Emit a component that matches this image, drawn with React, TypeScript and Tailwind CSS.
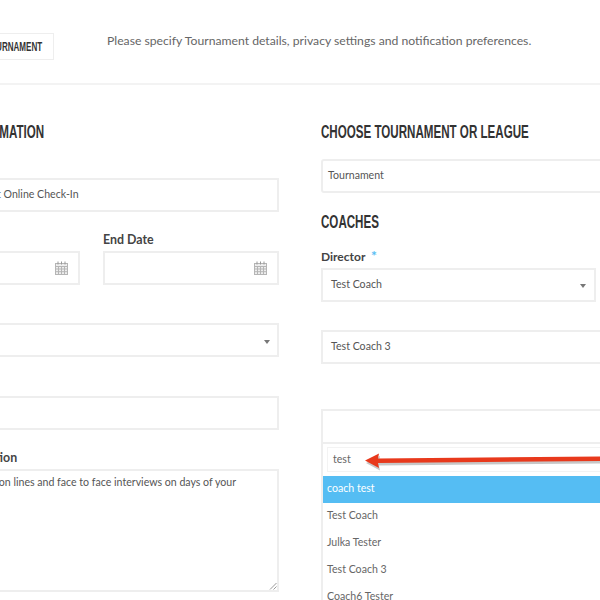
const bodyFont = "font-['Lato','Noto_Sans',sans-serif]"
const headingFont = "font-['Liberation_Sans',sans-serif]"

function CalendarIcon() {
  return (
    <svg width="13" height="14" viewBox="0 0 13 14" fill="none" stroke="#b5b5b5" strokeWidth="1">
      <rect x="0.5" y="2.5" width="12" height="11" fill="#eeeeee" />
      <path d="M0.5 5.5h12M0.5 8h12M0.5 10.7h12M3.5 5.5v8M6.5 5.5v8M9.5 5.5v8" />
      <path d="M3 0.5v3M6.5 0.5v3M10 0.5v3" stroke="#999999" />
    </svg>
  )
}

function Caret() {
  return <span className="mt-[3px] h-0 w-0 border-x-[3.5px] border-t-[4px] border-x-transparent border-t-[#777]" />
}

function Field({ children, className = '' }: { children?: React.ReactNode; className?: string }) {
  return (
    <div className={`flex items-center border-2 border-[#eeeeee] bg-white text-[10.6px] text-[#555] ${className}`}>
      {children}
    </div>
  )
}

function Heading({ children, className = '' }: { children: React.ReactNode; className?: string }) {
  return (
    <h2
      className={`${headingFont} origin-left scale-x-[0.61] text-[19px] leading-[20px] font-bold whitespace-nowrap text-[#333] ${className}`}
    >
      {children}
    </h2>
  )
}

export default function App() {
  return (
    <div className={`${bodyFont} relative h-[600px] w-[600px] overflow-hidden bg-white`}>
      {/* top bar */}
      <div className="flex h-[85px] w-[600px] items-start border-b-2 border-[#f3f3f3] pt-[33px]">
        <div className="-ml-[60px] flex h-[27px] w-[114px] shrink-0 items-center justify-end border border-[#eeeeee] pr-[11px]">
          <span
            className={`${headingFont} origin-right scale-x-[0.62] text-[13px] font-bold whitespace-nowrap text-[#333]`}
          >
            TOURNAMENT
          </span>
        </div>
        <p className="ml-[53px] text-[12.2px] leading-[16px] whitespace-nowrap text-[#666]">
          Please specify Tournament details, privacy settings and notification preferences.
        </p>
      </div>

      <div className="-ml-[73px] flex w-[746px] gap-[42px]">
        {/* left column */}
        <div className="flex w-[352px] shrink-0 flex-col">
          <Heading className="mt-[37px] -ml-[3px]">BASIC INFORMATION</Heading>
          <Field className="mt-[36px] h-[34px] pb-[1px] pl-[16px]">Tournament Online Check-In</Field>
          <div className="mt-[39px] flex gap-[23px]">
            <Field className="h-[34px] w-[153px] justify-end pr-[10px]">
              <CalendarIcon />
            </Field>
            <div className="relative w-[176px]">
              <span className="absolute -top-[19px] left-0 text-[12.4px] leading-[16px] font-bold whitespace-nowrap text-[#444]">
                End Date
              </span>
              <Field className="h-[34px] justify-end pr-[10px]">
                <CalendarIcon />
              </Field>
            </div>
          </div>
          <Field className="mt-[38px] h-[34px] justify-end pr-[7px]">
            <Caret />
          </Field>
          <Field className="mt-[39px] h-[34px]" />
          <span className="mt-[20px] pl-[26px] text-[12.4px] leading-[16px] font-bold whitespace-nowrap text-[#444]">
            Description
          </span>
          <Field className="relative mt-[3px] h-[123px] items-start pt-[4px] pl-[12px]">
            No registration lines and face to face interviews on days of your
            <svg className="absolute right-0 bottom-0" width="8" height="8" viewBox="0 0 8 8" stroke="#999" fill="none">
              <path d="M1 7.5L7.5 1M4.5 7.5L7.5 4.5" />
            </svg>
          </Field>
        </div>

        {/* right column */}
        <div className="flex w-[352px] shrink-0 flex-col">
          <Heading className="mt-[37px]">CHOOSE TOURNAMENT OR LEAGUE</Heading>
          <Field className="mt-[17px] h-[34px] rounded-[3px] pb-[1px] pl-[5px]">Tournament</Field>
          <Heading className="mt-[19px]">COACHES</Heading>
          <span className="mt-[17px] h-[16px] text-[12px] leading-[16px] font-bold text-[#444]">
            Director <span className="ml-[3px] text-[14px] leading-none text-[#57bdf3]">*</span>
          </span>
          <Field className="mt-[3px] h-[34px] w-[275px] justify-between pr-[8px] pb-[1px] pl-[8px]">
            Test Coach
            <Caret />
          </Field>
          <Field className="mt-[28px] h-[34px] pb-[1px] pl-[8px]">Test Coach 3</Field>

          {/* open select */}
          <div className="mt-[45px] border-x-2 border-t-2 border-[#eeeeee]">
            <div className="h-[33px] border-b-2 border-[#eeeeee]" />
            <div className="p-[3px_4px_4px_4px]">
              <div className="flex h-[25px] items-center border border-[#f3f3f3] pl-[5px] text-[10.6px] text-[#666]">
                test
              </div>
            </div>
            <ul className="text-[10.6px] text-[#666]">
              <li className="flex h-[27px] items-center bg-[#55bdf3] pb-[2px] pl-[4px] text-white">coach test</li>
              <li className="flex h-[27px] items-center pb-[2px] pl-[4px]">Test Coach</li>
              <li className="flex h-[27px] items-center pb-[2px] pl-[4px]">Julka Tester</li>
              <li className="flex h-[27px] items-center pb-[2px] pl-[4px]">Test Coach 3</li>
              <li className="flex h-[27px] items-center pb-[2px] pl-[4px]">Coach6 Tester</li>
            </ul>
          </div>
        </div>
      </div>

      {/* red annotation arrow */}
      <svg className="absolute top-[450px] left-[360px]" width="240" height="24" viewBox="0 0 240 24">
        <path d="M5 10.5L19 3.5L18 8.5L240 6.5V11L18 13L19 18Z" fill="#000" opacity="0.22" transform="translate(1 2.5)" />
        <path d="M5 10.5L19 3.5L18 8.5L240 6.5V11L18 13L19 18Z" fill="#e8391c" />
      </svg>
    </div>
  )
}
